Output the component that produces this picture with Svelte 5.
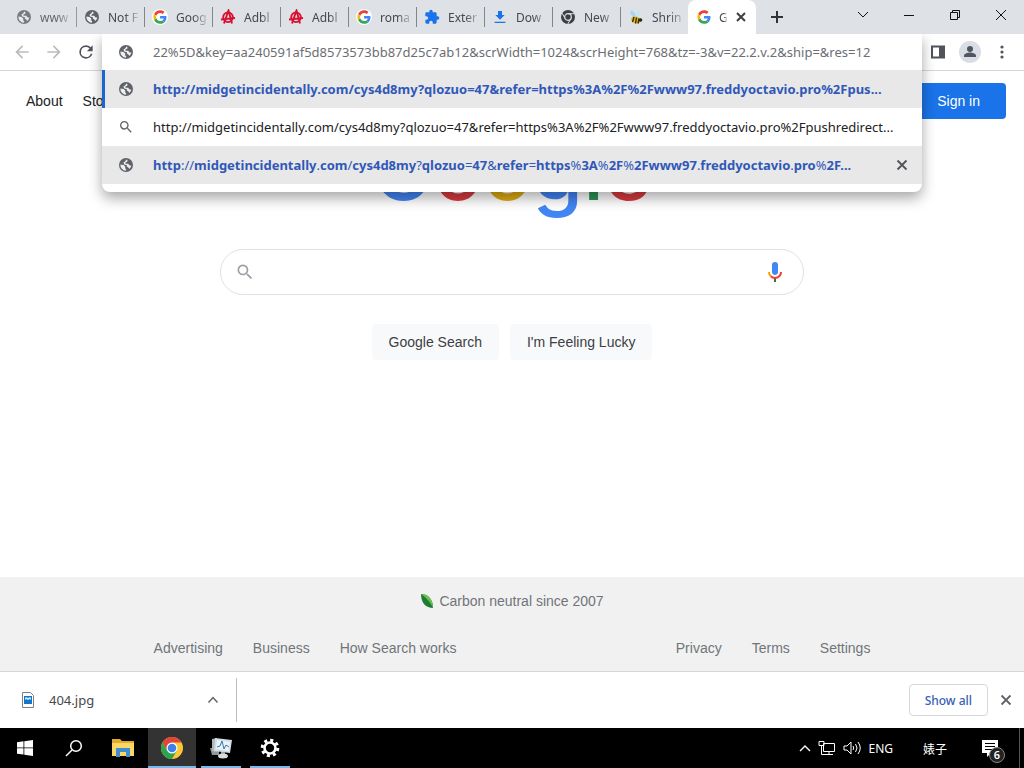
<script lang="ts">
  const tabs = [
    { icon: "globe", title: "www", faded: true },
    { icon: "globe", title: "Not F" },
    { icon: "google", title: "Goog" },
    { icon: "adblock", title: "Adbl" },
    { icon: "adblock", title: "Adbl" },
    { icon: "google", title: "roma" },
    { icon: "puzzle", title: "Exter" },
    { icon: "download", title: "Dow" },
    { icon: "chrome", title: "New" },
    { icon: "bee", title: "Shrin" },
  ];

  const logo = [
    ["G", "blue"],
    ["o", "red"],
    ["o", "yellow"],
    ["g", "blue"],
    ["l", "green"],
    ["e", "red"],
  ];

  const url = "http://midgetincidentally.com/cys4d8my?qlozuo=47&refer=https%3A%2F%2Fwww97.freddyoctavio.pro%2F";

  // separators stay light, the matched words are bold
  const parts = `${url}...`.split(/(:\/\/|\.\.\.|[.?=&%\/])/).filter(Boolean);
  const isMark = (s: string) => /^(:\/\/|[.\/?=&%])$/.test(s);

  let address = $state(
    "22%5D&key=aa240591af5d8573573bb87d25c7ab12&scrWidth=1024&scrHeight=768&tz=-3&v=22.2.v.2&ship=&res=12"
  );
  let query = $state("");
</script>

{#snippet icon(name: string, size = 16)}
  {#if name === "globe"}
    <svg width={size} height={size} viewBox="0 0 16 16">
      <circle cx="8" cy="8" r="7" fill="#5f6368" />
      <path d="M2.400 7.400 5.600 8l1.600 1.600v1.800l1 .8-.2 1.600A6 6 0 0 1 2.400 7.400z" fill="#eee" />
      <path d="M8.500 2.500 9.400 3v1.400L7.600 5.600l-.2 1.200h2.800l1.400 1.600 1.800.2a6 6 0 0 1-2 3.400l-1-1.600-1.600-.8.2-1.400L6.200 7.400l-.8-1.600L7 4.400z" fill="#eee" />
    </svg>
  {:else if name === "google"}
    <svg width={size} height={size} viewBox="0 0 48 48">
      <circle cx="24" cy="24" r="24" fill="#fff" />
      <g transform="translate(4 4) scale(.84)">
        <path fill="#ea4335" d="M24 9.500c3.540 0 6.710 1.220 9.210 3.600l6.850-6.850C35.900 2.380 30.470 0 24 0 14.620 0 6.510 5.380 2.560 13.220l7.980 6.190C12.430 13.720 17.740 9.500 24 9.500z" />
        <path fill="#4285f4" d="M46.980 24.550c0-1.570-.15-3.090-.38-4.550H24v9.020h12.940c-.58 2.960-2.260 5.480-4.780 7.180l7.730 6c4.510-4.180 7.090-10.360 7.090-17.650z" />
        <path fill="#fbbc05" d="M10.530 28.590c-.48-1.450-.76-2.990-.76-4.590s.27-3.140.76-4.590l-7.980-6.190C.92 16.460 0 20.120 0 24c0 3.880.92 7.540 2.560 10.780l7.970-6.190z" />
        <path fill="#34a853" d="M24 48c6.480 0 11.930-2.130 15.890-5.810l-7.730-6c-2.150 1.450-4.920 2.300-8.160 2.300-6.260 0-11.570-4.220-13.470-9.910l-7.980 6.190C6.510 42.620 14.620 48 24 48z" />
      </g>
    </svg>
  {:else if name === "adblock"}
    <svg width={size} height={size} viewBox="0 0 16 16" fill="none" stroke="#d9102f" stroke-width="1.900">
      <circle cx="8" cy="8.300" r="4.800" />
      <path d="M4 14.500 8.500 1.500l3.500 13M1 10.500l14-1.500" />
    </svg>
  {:else if name === "puzzle"}
    <svg width={size} height={size} viewBox="0 0 24 24">
      <path fill="#1a73e8" d="M20.500 11H19V7c0-1.100-.9-2-2-2h-4V3.500a2.500 2.500 0 0 0-5 0V5H4c-1.100 0-2 .9-2 2v3.800h1.500a2.700 2.700 0 0 1 0 5.400H2V20c0 1.100.9 2 2 2h3.800v-1.500a2.700 2.700 0 0 1 5.400 0V22H17c1.100 0 2-.9 2-2v-4h1.500a2.500 2.500 0 0 0 0-5z" />
    </svg>
  {:else if name === "download"}
    <svg width={size} height={size} viewBox="0 0 24 24">
      <path fill="#1a73e8" d="M19 9h-4V3H9v6H5l7 7 7-7zM4 19v2h16v-2H4z" />
    </svg>
  {:else if name === "chrome"}
    <svg width={size} height={size} viewBox="0 0 16 16" fill="none" stroke="#dee1e6">
      <circle cx="8" cy="8" r="7" fill="#3c4043" stroke="none" />
      <circle cx="8" cy="8" r="3.300" stroke-width="1.200" />
      <path d="M8 4.700h6.500M5.200 9.600 2 4M10.800 9.600 7.800 15" />
    </svg>
  {:else if name === "bee"}
    <svg width={size} height={size} viewBox="0 0 16 16">
      <ellipse cx="5" cy="5" rx="2" ry="3.800" fill="#a9d5ef" transform="rotate(-30 5 5)" />
      <ellipse cx="10" cy="5" rx="1.700" ry="3.600" fill="#c6e4f4" transform="rotate(20 10 5)" />
      <ellipse cx="8" cy="11" rx="5" ry="3.400" fill="#e5b81c" transform="rotate(15 8 11)" />
      <path d="m6 8-1.500 5M8.500 8.500l-1 6M11 9.500l-1 5" stroke="#2b2616" stroke-width="1.300" />
      <circle cx="12.500" cy="11" r="1.800" fill="#2b2616" />
    </svg>
  {:else if name === "search"}
    <svg width={size} height={size} viewBox="0 0 24 24" fill="currentColor">
      <path d="M15.500 14h-.79l-.28-.27A6.470 6.470 0 0 0 16 9.500 6.500 6.500 0 1 0 9.500 16c1.610 0 3.090-.59 4.230-1.570l.27.28v.79l5 4.990L20.490 19l-4.990-5zm-6 0C7.010 14 5 11.990 5 9.500S7.010 5 9.500 5 14 7.010 14 9.500 11.990 14 9.500 14z" />
    </svg>
  {:else if name === "close"}
    <svg width={size} height={size} viewBox="0 0 16 16" stroke="currentColor" stroke-width="1.800">
      <path d="m3.500 3.500 9 9M12.500 3.500l-9 9" />
    </svg>
  {/if}
{/snippet}

<div class="desktop">
  <header class="tab-strip">
    <div class="tabs" role="tablist">
      {#each tabs as tab}
        <button class="tab" class:faded={tab.faded} role="tab" aria-selected="false">
          {@render icon(tab.icon)}
          <span class="tab-title">{tab.title}</span>
        </button>
      {/each}
      <div class="tab active" role="tab" aria-selected="true" tabindex="0">
        {@render icon("google")}
        <span class="tab-title">G</span>
        <button class="tab-close" aria-label="Close tab">
          <svg width="12" height="12" viewBox="0 0 12 12" stroke="#3c4043" stroke-width="2"><path d="m2 2 8 8M10 2l-8 8" /></svg>
        </button>
      </div>
    </div>
    <button class="new-tab" aria-label="New tab">
      <svg width="14" height="14" viewBox="0 0 14 14" stroke="#303338" stroke-width="2"><path d="M7 1v12M1 7h12" /></svg>
    </button>
    <div class="window-controls">
      <button aria-label="Search tabs">
        <svg width="12" height="12" viewBox="0 0 12 12"><path d="m1 3 5 5 5-5" /></svg>
      </button>
      <button aria-label="Minimize">
        <svg width="12" height="12" viewBox="0 0 12 12"><path d="M1 6.500h10" /></svg>
      </button>
      <button aria-label="Restore">
        <svg width="12" height="12" viewBox="0 0 12 12"><path d="M1.500 3.500h7v7h-7zM3.500 3.500v-2h7v7h-2" /></svg>
      </button>
      <button aria-label="Close window">
        <svg width="12" height="12" viewBox="0 0 12 12"><path d="m1 1 10 10M11 1 1 11" /></svg>
      </button>
    </div>
  </header>

  <div class="toolbar">
    <button class="tool dim" aria-label="Back">
      <svg width="20" height="20" viewBox="0 0 24 24"><path fill="currentColor" d="M20 11H7.830l5.590-5.590L12 4l-8 8 8 8 1.410-1.410L7.830 13H20v-2z" /></svg>
    </button>
    <button class="tool dim" aria-label="Forward">
      <svg width="20" height="20" viewBox="0 0 24 24"><path fill="currentColor" d="m12 4-1.410 1.410L16.170 11H4v2h12.170l-5.580 5.590L12 20l8-8z" /></svg>
    </button>
    <button class="tool" aria-label="Reload">
      <svg width="20" height="20" viewBox="0 0 24 24"><path fill="currentColor" d="M17.650 6.350A7.960 7.960 0 0 0 12 4a8 8 0 1 0 7.730 10h-2.080A6 6 0 1 1 12 6c1.660 0 3.140.69 4.220 1.780L13 11h7V4l-2.350 2.350z" /></svg>
    </button>

    <div class="omnibox">
      <div class="popup">
        <label class="address">
          {@render icon("globe")}
          <input aria-label="Address" bind:value={address} spellcheck="false" />
        </label>
        <a class="suggestion selected" href="#first">
          {@render icon("globe")}
          <b class="url match">{url}pus...</b>
        </a>
        <a class="suggestion plain" href="#search">
          {@render icon("search")}
          <span class="url">{url}pushredirect...</span>
        </a>
        <div class="suggestion hovered">
          {@render icon("globe")}
          <a class="url match" href="#history">
            {#each parts as part}{#if isMark(part)}{part}{:else}<b>{part}</b>{/if}{/each}
          </a>
          <button class="remove" aria-label="Remove suggestion">{@render icon("close")}</button>
        </div>
      </div>
    </div>

    <button class="tool" aria-label="Side panel">
      <svg width="16" height="16" viewBox="0 0 16 16"><path d="M2 2.500h12v11H2z" fill="none" stroke="currentColor" stroke-width="2" /><path d="M9 2h5v12H9z" fill="currentColor" /></svg>
    </button>
    <button class="tool" aria-label="Profile">
      <svg width="22" height="22" viewBox="0 0 22 22"><circle cx="11" cy="11" r="11" fill="#dadde5" /><circle cx="11" cy="8" r="3" fill="#50565f" /><path d="M5 16v-1.500c0-2 4-3 6-3s6 1 6 3V16z" fill="#50565f" /></svg>
    </button>
    <button class="tool" aria-label="Menu">
      <svg width="16" height="16" viewBox="0 0 16 16" fill="currentColor"><circle cx="8" cy="3" r="1.600" /><circle cx="8" cy="8" r="1.600" /><circle cx="8" cy="13" r="1.600" /></svg>
    </button>
  </div>

  <main class="page">
    <nav class="page-nav">
      <a href="#about">About</a>
      <a href="#store">Store</a>
      <button class="sign-in">Sign in</button>
    </nav>

    <div class="logo">
      {#each logo as [letter, color]}<span class={color}>{letter}</span>{/each}
    </div>

    <form class="search">
      <label class="search-box">
        {@render icon("search", 20)}
        <input aria-label="Search" bind:value={query} />
        <svg width="24" height="24" viewBox="0 0 24 24">
          <path fill="#4285f4" d="M12 15c1.660 0 3-1.310 3-2.970V4.970A3 3 0 0 0 12 2a3 3 0 0 0-3 2.970v7.060C9 13.690 10.340 15 12 15z" />
          <path fill="#34753a" d="M11 18.080h2V22h-2z" />
          <path fill="#f4a004" d="M7.050 16.870A6.900 6.900 0 0 1 5 12h2c0 1.370.55 2.590 1.440 3.470l-1.390 1.400z" />
          <path fill="#ea4335" d="M12 16.930a4.970 4.970 0 0 1-3.540-1.450l-1.410 1.400A6.900 6.900 0 0 0 12 18.900c3.870 0 7-2.920 7-6.900h-2c0 2.920-2.240 4.930-5 4.930z" />
        </svg>
      </label>
      <div class="search-buttons">
        <button type="button">Google Search</button>
        <button type="button">I'm Feeling Lucky</button>
      </div>
    </form>
  </main>

  <footer class="page-footer">
    <a class="carbon" href="#carbon">
      <svg width="14" height="16" viewBox="0 0 14 16">
        <path d="M1 1c6 0 12 4 12 14C6 15 1 10 1 1z" fill="#1e7b34" />
        <path d="M1 1c6 0 12 4 12 14C11 10 7 5 1 1z" fill="#6cc24f" />
      </svg>
      Carbon neutral since 2007
    </a>
    <div class="footer-row">
      <nav class="footer-links">
        <a href="#ads">Advertising</a>
        <a href="#business">Business</a>
        <a href="#how">How Search works</a>
      </nav>
      <nav class="footer-links">
        <a href="#privacy">Privacy</a>
        <a href="#terms">Terms</a>
        <a href="#settings">Settings</a>
      </nav>
    </div>
  </footer>

  <section class="shelf">
    <div class="download">
      <svg width="14" height="16" viewBox="0 0 14 16">
        <path d="M1.500.5h8l3 3v12h-11z" fill="#fff" stroke="#7a7f85" />
        <path d="M3 4h8v8H3z" fill="#1377c9" />
        <path d="m4 8 1-1 2 1 2-1 1 1V6L9 5 7 6 5 5 4 6z" fill="#cfe8fa" />
      </svg>
      <span class="file">404.jpg</span>
      <button class="icon-button" aria-label="File actions">
        <svg width="12" height="12" viewBox="0 0 12 12" fill="none" stroke="#5f6368" stroke-width="1.500"><path d="m1.500 8.500 4.500-5 4.500 5" /></svg>
      </button>
    </div>
    <button class="show-all">Show all</button>
    <button class="icon-button" aria-label="Close downloads">{@render icon("close")}</button>
  </section>

  <div class="taskbar">
    <button class="task" aria-label="Start">
      <svg width="16" height="16" viewBox="0 0 16 16" fill="#fff"><path d="m0 2.200 6.500-.9v6.200H0zM7.300 1.200 16 0v7.500H7.300zM0 8.300h6.500v6.300L0 13.700zM7.300 8.300H16V16l-8.700-1.200z" /></svg>
    </button>
    <button class="task" aria-label="Search Windows">
      <svg width="18" height="18" viewBox="0 0 18 18" fill="none" stroke="#fff" stroke-width="1.500"><circle cx="11" cy="7" r="5.300" /><path d="m7 11-6 6" /></svg>
    </button>
    <button class="task" aria-label="File Explorer">
      <svg width="22" height="20" viewBox="0 0 22 20">
        <path d="M0 1h8l2 2h12v15H0z" fill="#e5a92c" />
        <path d="M0 5h22v13H0z" fill="#fcd667" />
        <path d="M4 19v-9h14v9h-4v-5H8v5z" fill="#3f8fd0" />
      </svg>
    </button>
    <button class="task open current" aria-label="Chrome">
      <svg width="24" height="24" viewBox="0 0 24 24">
        <circle cx="12" cy="12" r="11" fill="#fcc934" />
        <path d="M2.470 6.500A11 11 0 0 1 21.530 6.500H12L7.240 14.750z" fill="#e0443a" />
        <path d="M2.470 6.500A11 11 0 0 0 12 23l4.760-8.250H7.240z" fill="#2da34e" />
        <circle cx="12" cy="12" r="5.500" fill="#fff" />
        <circle cx="12" cy="12" r="4.300" fill="#3f80ea" />
      </svg>
    </button>
    <button class="task open" aria-label="Resource Monitor">
      <svg width="24" height="22" viewBox="0 0 24 22">
        <path d="M1 11h9v7H3z" fill="#8e979c" />
        <path d="m3 2 5-1v14l-5-1z" fill="#aeb7bb" />
        <path d="m6 1 17 2-2 13-16-2z" fill="#d4dce0" />
        <path d="m8 3 13 2-1 9-13-2z" fill="#eaf4fa" />
        <path d="m8 10 3-1 2-5 2 8 2-4 3 2" fill="none" stroke="#3a79a8" />
        <path d="M12 15h4v3h-4z" fill="#9aa3a8" />
        <ellipse cx="14" cy="19" rx="5" ry="2.500" fill="#d6dcdf" />
      </svg>
    </button>
    <button class="task open" aria-label="Settings">
      <svg width="20" height="20" viewBox="0 0 20 20" fill="none" stroke="#fff">
        <circle cx="10" cy="10" r="5.500" stroke-width="2.600" />
        <circle cx="10" cy="10" r="7.800" stroke-width="3" stroke-dasharray="3.060 3.060" />
      </svg>
    </button>

    <div class="tray">
      <svg width="12" height="12" viewBox="0 0 12 12" stroke-width="1.400"><path d="m1 9 5-5 5 5" /></svg>
      <svg width="18" height="16" viewBox="0 0 18 16"><path d="M5.500 3.500h11v8h-11zM11 11.500v3M6 14.500h9M1 1.500h5v4H1zM3.500 5.500v9H6" /></svg>
      <svg width="18" height="16" viewBox="0 0 18 16"><path d="M1 6h3l4-4v12L4 10H1zM10 6q1.500 2 0 4M12.500 4q3 4 0 8M15 2q4.500 6 0 12" /></svg>
      <span class="lang">ENG</span>
      <span class="clock">婊子</span>
      <button class="notifications" aria-label="Notifications">
        <svg width="16" height="17" viewBox="0 0 16 17"><path d="M0 0h16v13H9l-4 4v-4H0z" fill="#fff" stroke="none" /><path d="M3 3.500h10M3 6.500h10M3 9.500h7" stroke="#000" /></svg>
        <span class="badge">6</span>
      </button>
      <button class="show-desktop" aria-label="Show desktop"></button>
    </div>
  </div>
</div>

<style>
  :global(body) {
    margin: 0;
    background: #fff;
  }

  .desktop {
    --ui: "Noto Sans", "Open Sans", sans-serif;
    --web: "Liberation Sans", Arial, sans-serif;
    display: flex;
    flex-direction: column;
    min-height: 100vh;
    font-family: var(--ui);
    font-size: 13px;
    color: #202124;
  }

  .desktop * {
    box-sizing: border-box;
  }

  button {
    display: flex;
    align-items: center;
    justify-content: center;
    padding: 0;
    border: 0;
    background: none;
    color: inherit;
    font: inherit;
  }

  a {
    color: inherit;
    text-decoration: none;
  }

  svg {
    flex: none;
  }

  input {
    flex: 1;
    min-width: 0;
    padding: 0;
    border: 0;
    outline: 0;
    background: none;
    font: inherit;
  }

  /* tab strip */
  .tab-strip {
    position: relative;
    z-index: 2;
    display: flex;
    height: 34px;
    padding-left: 8px;
    background: #dee1e6;
  }

  .tabs {
    display: flex;
  }

  .tab {
    position: relative;
    justify-content: flex-start;
    gap: 8px;
    width: 68px;
    padding: 0 2px 0 8px;
    font-size: 12px;
    color: #45494d;
  }

  .tab:not(.active)::after {
    content: "";
    position: absolute;
    right: -1px;
    width: 1px;
    height: 20px;
    background: #80868b;
  }

  .tab:nth-child(10)::after {
    display: none;
  }

  .faded {
    opacity: 0.8;
  }

  .tab-title {
    flex: 1;
    text-align: left;
    white-space: nowrap;
    mask-image: linear-gradient(to right, #000 50%, transparent);
  }

  .tab.active {
    display: flex;
    align-items: center;
    gap: 7px;
    padding-right: 8px;
    border-radius: 8px 8px 0 0;
    background: #fff;
  }

  .tab-close {
    width: 16px;
    height: 16px;
  }

  .new-tab {
    width: 42px;
  }

  .window-controls {
    display: flex;
    margin-left: auto;
    padding-bottom: 5px;
  }

  .window-controls button {
    width: 46px;
  }

  .window-controls svg {
    fill: none;
    stroke: #111;
  }

  /* toolbar */
  .toolbar {
    position: relative;
    z-index: 1;
    display: flex;
    height: 37px;
    padding: 0 6px;
    border-bottom: 1px solid #d5d7da;
    background: #fff;
  }

  .tool {
    width: 32px;
    color: #50545a;
  }

  .tool.dim {
    color: #babcbe;
  }

  .omnibox {
    position: relative;
    flex: 1;
  }

  .popup {
    position: absolute;
    top: 0;
    left: 0;
    right: 0;
    padding-bottom: 8px;
    border-radius: 0 0 8px 8px;
    background: #fff;
    box-shadow: 0 6px 14px rgba(0, 0, 0, 0.35);
  }

  .address,
  .suggestion {
    display: flex;
    align-items: center;
    gap: 19px;
    padding: 0 12px 0 16px;
  }

  .address {
    height: 36px;
  }

  .address input {
    color: #6b6e72;
  }

  .suggestion {
    height: 38px;
  }

  .selected {
    background: #e8e8e8;
    box-shadow: inset 3px 0 #1a66d2;
  }

  .hovered {
    background: #e8e8e8;
  }

  .plain svg {
    color: #5f6368;
  }

  .url {
    flex: 1;
    overflow: hidden;
    text-overflow: ellipsis;
    white-space: nowrap;
  }

  .match {
    color: #3058b8;
  }

  .remove {
    width: 16px;
    color: #505357;
  }

  /* page */
  .page {
    flex: 1;
    display: flex;
    flex-direction: column;
    align-items: center;
    font-family: var(--web);
    font-size: 14px;
  }

  .page-nav {
    display: flex;
    align-items: center;
    align-self: stretch;
    gap: 20px;
    padding: 12px 18px 0 26px;
  }

  .sign-in {
    height: 36px;
    margin-left: auto;
    padding: 0 26px;
    border-radius: 4px;
    background: #1a73e8;
    color: #fff;
  }

  .logo {
    margin-top: 6px;
    font-family: Inter, sans-serif;
    font-size: 82px;
    font-weight: 500;
    line-height: 92px;
  }

  .blue {
    color: #4285f4;
  }

  .red {
    color: #d93a3f;
  }

  .yellow {
    color: #e0ab12;
  }

  .green {
    color: #2f9457;
  }

  .search {
    width: 584px;
    max-width: 90%;
    margin-top: 32px;
  }

  .search-box {
    display: flex;
    align-items: center;
    gap: 12px;
    height: 46px;
    padding: 0 16px 0 14px;
    border: 1px solid #dfe1e5;
    border-radius: 23px;
    color: #9aa0a6;
  }

  .search-buttons {
    display: flex;
    justify-content: center;
    gap: 11px;
    margin-top: 29px;
  }

  .search-buttons button {
    height: 36px;
    padding: 0 17px;
    border-radius: 4px;
    background: #f8f9fa;
    color: #3c4043;
  }

  .page-footer {
    display: flex;
    flex-direction: column;
    gap: 15px;
    padding: 8px 0 7px;
    background: #f1f1f1;
    color: #70757a;
    font-family: var(--web);
    font-size: 14px;
    line-height: 32px;
  }

  .carbon {
    display: flex;
    align-items: center;
    justify-content: center;
    gap: 5px;
  }

  .footer-row {
    display: flex;
    justify-content: space-between;
    padding: 0 15%;
  }

  .footer-links {
    display: flex;
    gap: 30px;
  }

  /* download shelf */
  .shelf {
    display: flex;
    align-items: center;
    gap: 6px;
    height: 57px;
    padding-right: 6px;
    border-top: 1px solid #d5d7da;
    background: #fff;
  }

  .download {
    display: flex;
    align-items: center;
    gap: 14px;
    width: 237px;
    height: 44px;
    margin-right: auto;
    padding: 0 11px 0 21px;
    border-right: 1px solid #bcbec1;
  }

  .file {
    flex: 1;
    color: #45484c;
  }

  .icon-button {
    width: 24px;
    height: 24px;
    color: #5f6368;
  }

  .show-all {
    height: 32px;
    padding: 0 15px;
    border: 1px solid #d5d7da;
    border-radius: 4px;
    color: #3660b5;
    font-size: 12px;
    font-weight: 500;
  }

  /* taskbar */
  .taskbar {
    display: flex;
    gap: 1px;
    height: 40px;
    padding-left: 1px;
    background: #000;
    color: #fff;
    font-size: 12px;
  }

  .task {
    position: relative;
    width: 48px;
  }

  .task.open::after {
    content: "";
    position: absolute;
    left: 4px;
    right: 4px;
    bottom: 0;
    height: 2px;
    background: #76b9ed;
  }

  .task.current {
    background: #333;
  }

  .task.current::after {
    left: 0;
    right: 0;
  }

  .tray {
    display: flex;
    align-items: center;
    gap: 7px;
    margin-left: auto;
  }

  .tray svg {
    fill: none;
    stroke: #fff;
  }

  .clock {
    margin: 0 28px 0 23px;
    font-family: "Noto Sans CJK SC", sans-serif;
  }

  .notifications {
    position: relative;
    justify-content: flex-start;
    width: 30px;
    height: 40px;
  }

  .badge {
    position: absolute;
    left: 7px;
    top: 19px;
    width: 16px;
    height: 16px;
    border: 1px solid #888;
    border-radius: 50%;
    background: #222;
    font-size: 11px;
    font-weight: 600;
    line-height: 14px;
    text-align: center;
  }

  .show-desktop {
    width: 5px;
    height: 40px;
    border-left: 1px solid #555;
  }
</style>
